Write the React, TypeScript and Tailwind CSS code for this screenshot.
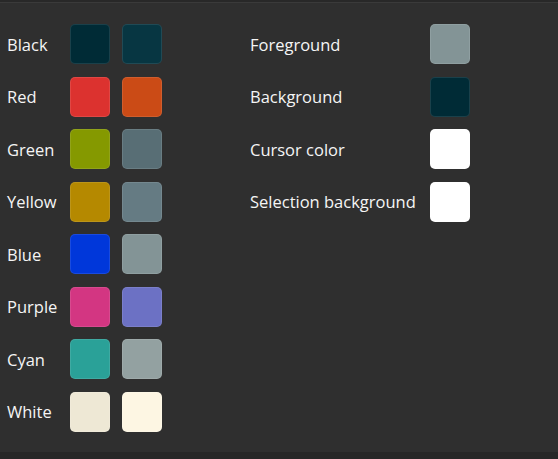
import React from 'react';

const palette = [
  { label: 'Black', normal: '#002b36', bright: '#073642' },
  { label: 'Red', normal: '#dc322f', bright: '#cb4b16' },
  { label: 'Green', normal: '#859900', bright: '#586e75' },
  { label: 'Yellow', normal: '#b58900', bright: '#657b83' },
  { label: 'Blue', normal: '#0037da', bright: '#839496' },
  { label: 'Purple', normal: '#d33682', bright: '#6c71c4' },
  { label: 'Cyan', normal: '#2aa198', bright: '#93a1a1' },
  { label: 'White', normal: '#eee8d5', bright: '#fdf6e3' },
];

const extras = [
  { label: 'Foreground', color: '#839496' },
  { label: 'Background', color: '#002b36' },
  { label: 'Cursor color', color: '#ffffff' },
  { label: 'Selection background', color: '#ffffff' },
];

function Swatch({ color }: { color: string }) {
  return (
    <div
      className="w-10 h-10 rounded-[5px] border border-white/10"
      style={{ backgroundColor: color }}
    />
  );
}

export default function App() {
  return (
    <div
      className="w-[558px] h-[459px] bg-[#2f2f2f] text-[#f5f5f5] flex flex-col overflow-hidden"
      style={{ fontFamily: '"Open Sans", "Noto Sans", sans-serif' }}
    >
      <div className="h-[3px] bg-[#282828] border-b border-[#3a3a3a]" />
      <div className="flex-1 flex pt-[21px]">
        {/* Terminal colours */}
        <div className="w-[250px] pl-[7px] flex flex-col gap-[12.5px]">
          {palette.map((row) => (
            <div key={row.label} className="flex items-center h-10">
              <span className="w-[63px] text-[16.5px] leading-none pt-[2px]">{row.label}</span>
              <div className="flex gap-3">
                <Swatch color={row.normal} />
                <Swatch color={row.bright} />
              </div>
            </div>
          ))}
        </div>

        {/* Other colours */}
        <div className="flex flex-col gap-[12.5px]">
          {extras.map((row) => (
            <div key={row.label} className="flex items-center h-10">
              <span className="w-[180px] text-[16.5px] leading-none pt-[2px]">{row.label}</span>
              <Swatch color={row.color} />
            </div>
          ))}
        </div>
      </div>
      <div className="h-[7px] bg-[#272727]" />
    </div>
  );
}
